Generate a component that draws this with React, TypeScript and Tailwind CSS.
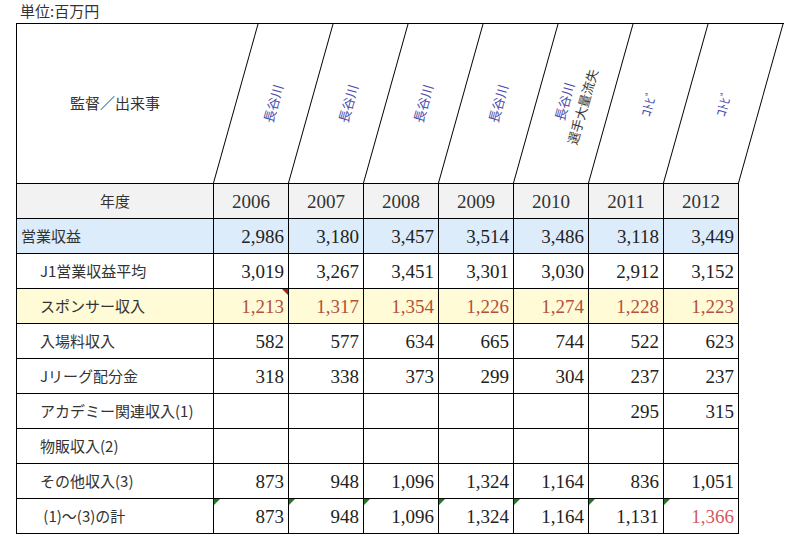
import React from "react";

const jp = "font-['Noto_Sans_CJK_JP','Noto_Sans',sans-serif]";
const serif = "font-['Liberation_Serif','Times_New_Roman',serif]";

type Row = {
  label: string;
  indent?: boolean;
  values: (string | null)[];
  kind?: "blue" | "yellow" | "total";
};

const years = ["2006", "2007", "2008", "2009", "2010", "2011", "2012"];

const rows: Row[] = [
  {
    label: "営業収益",
    values: ["2,986", "3,180", "3,457", "3,514", "3,486", "3,118", "3,449"],
    kind: "blue",
  },
  {
    label: "J1営業収益平均",
    indent: true,
    values: ["3,019", "3,267", "3,451", "3,301", "3,030", "2,912", "3,152"],
  },
  {
    label: "スポンサー収入",
    indent: true,
    values: ["1,213", "1,317", "1,354", "1,226", "1,274", "1,228", "1,223"],
    kind: "yellow",
  },
  {
    label: "入場料収入",
    indent: true,
    values: ["582", "577", "634", "665", "744", "522", "623"],
  },
  {
    label: "Jリーグ配分金",
    indent: true,
    values: ["318", "338", "373", "299", "304", "237", "237"],
  },
  {
    label: "アカデミー関連収入(1)",
    indent: true,
    values: [null, null, null, null, null, "295", "315"],
  },
  {
    label: "物販収入(2)",
    indent: true,
    values: [null, null, null, null, null, null, null],
  },
  {
    label: "その他収入(3)",
    indent: true,
    values: ["873", "948", "1,096", "1,324", "1,164", "836", "1,051"],
  },
  {
    label: " (1)～(3)の計",
    indent: true,
    values: ["873", "948", "1,096", "1,324", "1,164", "1,131", "1,366"],
    kind: "total",
  },
];

// coach / event per season, shown slanted in the header
const coaches: { name: string; note?: string }[] = [
  { name: "長谷川" },
  { name: "長谷川" },
  { name: "長谷川" },
  { name: "長谷川" },
  { name: "長谷川", note: "選手大量流失" },
  { name: "ｺﾄﾋﾞ" },
  { name: "ｺﾄﾋﾞ" },
];

function HeaderCell({ name, note, last }: { name: string; note?: string; last?: boolean }) {
  return (
    <div
      className={`${last ? "w-[76px] border-r" : "w-[75px]"} h-full border-l border-black origin-bottom -skew-x-[15.64deg] flex items-center justify-center`}
    >
      <div
        className={`${jp} text-[13px] leading-[19px] text-center whitespace-nowrap [transform:skewX(15.64deg)_rotate(-74deg)]`}
      >
        <div className="text-[#4848a8]">{name}</div>
        {note && <div className="text-[#3a3a3a]">{note}</div>}
      </div>
    </div>
  );
}

export default function App() {
  return (
    <div className="min-h-screen bg-white text-[#222]">
      <div className={`${jp} pl-[20px] pt-[1px] text-[15px] leading-[20px] text-[#333]`}>
        単位:百万円
      </div>

      <div className="mt-[2px] ml-[16px]">
        {/* slanted header */}
        <div className="flex h-[160px] w-[768px] border-t border-black">
          <div
            className={`${jp} w-[197px] border-l border-black flex items-center justify-center text-[15px] text-[#333]`}
          >
            監督／出来事
          </div>
          {coaches.map((c, i) => (
            <HeaderCell key={i} name={c.name} note={c.note} last={i === coaches.length - 1} />
          ))}
        </div>

        {/* body */}
        <div className="grid w-[723px] grid-cols-[197px_repeat(7,75px)] border-t border-l border-black">
          <div
            className={`${jp} h-[35px] border-r border-b border-black bg-[#f2f2f2] flex items-center justify-center text-[15px] text-[#333]`}
          >
            年度
          </div>
          {years.map((y) => (
            <div
              key={y}
              className={`${serif} h-[35px] border-r border-b border-black bg-[#f2f2f2] flex items-center justify-center pt-[2px] text-[19px] text-[#333]`}
            >
              {y}
            </div>
          ))}

          {rows.map((r) => {
            const bg =
              r.kind === "blue" ? "bg-[#dcecfa]" : r.kind === "yellow" ? "bg-[#fffbd6]" : "bg-white";
            return (
              <React.Fragment key={r.label}>
                <div
                  className={`${jp} ${bg} h-[35px] border-r border-b border-black flex items-center whitespace-pre text-[15px] text-[#333] ${r.indent ? "pl-[23px]" : "pl-[4px]"}`}
                >
                  {r.label}
                </div>
                {r.values.map((v, i) => {
                  let color = "text-[#222]";
                  if (r.kind === "yellow") color = "text-[#b4503c]";
                  if (r.kind === "total" && i === 6) color = "text-[#d25a64]";
                  return (
                    <div
                      key={i}
                      className={`${serif} ${bg} ${color} relative h-[35px] border-r border-b border-black flex items-center justify-end pr-[4px] pt-[3px] text-[19px]`}
                    >
                      {r.kind === "yellow" && i === 0 && (
                        <span className="absolute right-0 top-0 h-0 w-0 border-t-[6px] border-l-[6px] border-t-[#a3281e] border-l-transparent" />
                      )}
                      {r.kind === "total" && (
                        <span className="absolute left-0 top-0 h-0 w-0 border-t-[6px] border-r-[6px] border-t-[#217a21] border-r-transparent" />
                      )}
                      {v}
                    </div>
                  );
                })}
              </React.Fragment>
            );
          })}
        </div>
      </div>
    </div>
  );
}
